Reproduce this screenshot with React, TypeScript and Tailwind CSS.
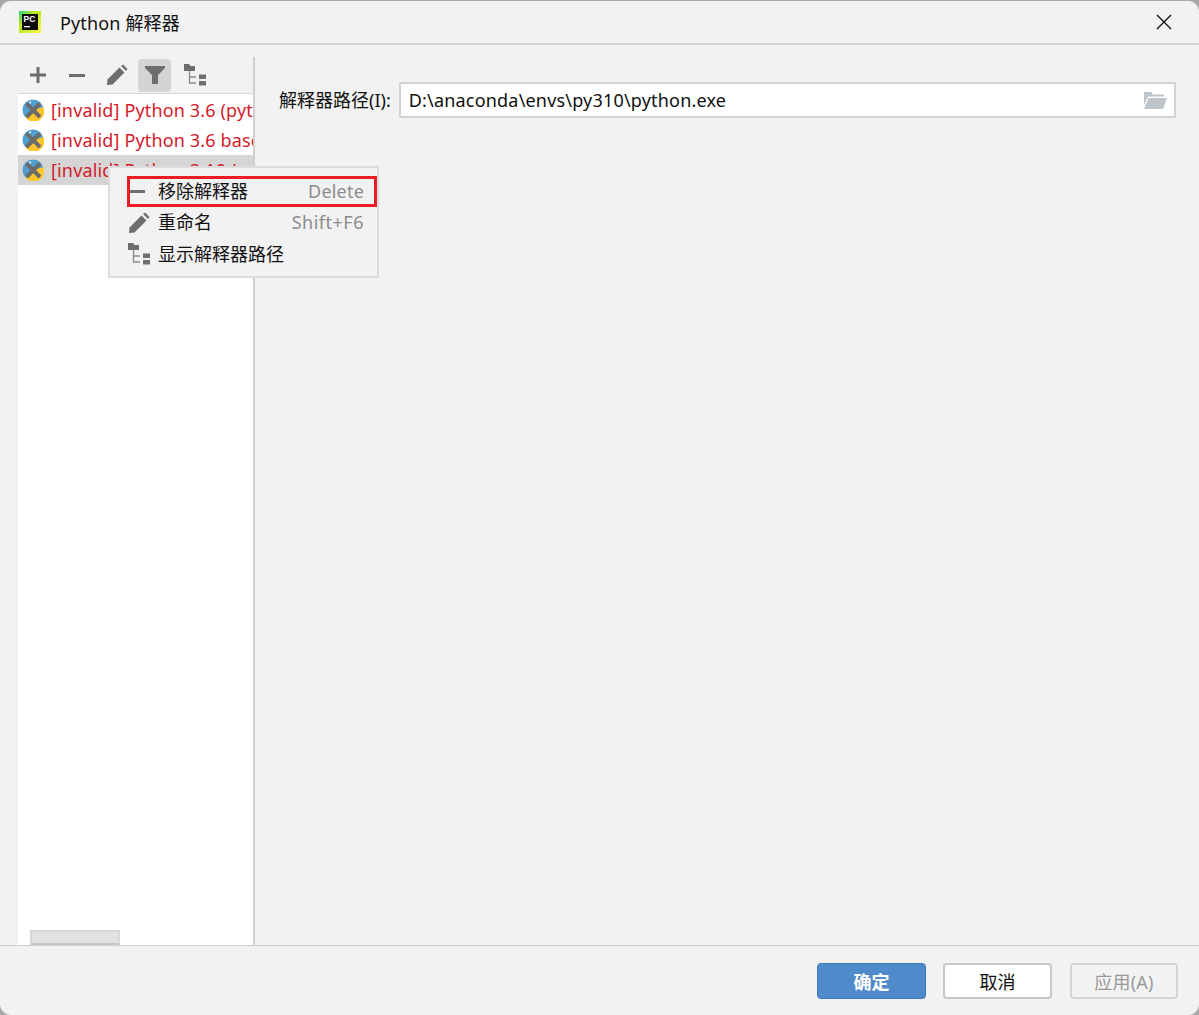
const font = { fontFamily: '"Noto Sans", "Noto Sans CJK SC", sans-serif' };

function PlusIcon() {
  return (
    <svg width="16" height="16" viewBox="0 0 16 16" fill="#6e6e6e">
      <rect x="0" y="6.5" width="16" height="3" />
      <rect x="6.5" y="0" width="3" height="16" />
    </svg>
  );
}
function MinusIcon({ w = 16 }: { w?: number }) {
  return (
    <svg width={w} height="3" viewBox={`0 0 ${w} 3`} fill="#6e6e6e">
      <rect width={w} height="3" />
    </svg>
  );
}
function PencilIcon() {
  return (
    <svg width="22" height="22" viewBox="0 0 22 22" fill="#6e6e6e">
      <path d="M1 21 L1.5 15.5 L13.5 3.5 L18.5 8.5 L6.5 20.5 Z" />
      <path d="M15 2 L17 0.5 L21.5 5 L20 7 Z" />
    </svg>
  );
}
function FilterIcon() {
  return (
    <svg width="20" height="18" viewBox="0 0 20 18" fill="#6e6e6e">
      <path d="M0 0 H20 V2 L13 9 V18 H7 V9 L0 2 Z" />
    </svg>
  );
}
function TreeIcon() {
  return (
    <svg width="22" height="22" viewBox="0 0 22 22">
      <path d="M0 0 H5 L6.5 2 H11 V7 H0 Z" fill="#6e6e6e" />
      <path d="M5.5 7 V19 H12 M5.5 13 H12" stroke="#8a8a8a" strokeWidth="1.3" fill="none" />
      <rect x="15" y="10.5" width="7" height="4.5" fill="#6e6e6e" />
      <rect x="15" y="17" width="7" height="4.5" fill="#6e6e6e" />
    </svg>
  );
}
function PythonInvalid() {
  return (
    <svg width="22" height="22" viewBox="0 0 22 22" className="shrink-0">
      <circle cx="11" cy="11" r="10.5" fill="#4f9fd0" />
      <path d="M21.5 8 A10.5 10.5 0 0 1 3.5 18.5 L11 11 Z" fill="#fdc62a" />
      <circle cx="8" cy="3.5" r="1.2" fill="#cde6f5" />
      <path d="M4.5 4.5 L18 18 M18 4.5 L4.5 18" stroke="#6b6b6b" strokeWidth="4" />
    </svg>
  );
}
function PcLogo() {
  return (
    <svg width="22" height="22" viewBox="0 0 22 22">
      <defs>
        <linearGradient id="pc" x1="0" y1="0" x2="1" y2="1">
          <stop offset="0" stopColor="#21d789" />
          <stop offset="0.35" stopColor="#b5e61d" />
          <stop offset="1" stopColor="#fcf84a" />
        </linearGradient>
      </defs>
      <rect width="22" height="22" fill="url(#pc)" />
      <rect x="3" y="3" width="16" height="16" fill="#0c0c0c" />
      <text x="4.5" y="11" fontSize="8.5" fontWeight="700" fill="#fff" fontFamily="Liberation Sans, sans-serif">PC</text>
      <rect x="5" y="15" width="6" height="1.3" fill="#fff" />
    </svg>
  );
}

function Row({ text, selected }: { text: string; selected?: boolean }) {
  return (
    <div className={`h-[30px] flex items-center pl-[4px] gap-[7px] overflow-hidden whitespace-nowrap ${selected ? 'bg-[#d5d5d5]' : ''}`}>
      <PythonInvalid />
      <span className="text-[#d41a2a] text-[18px] leading-[30px] tracking-[0.15px]">{text}</span>
    </div>
  );
}

function MenuItem({ icon, label, hint, boxed, lift, wide }: { icon: React.ReactNode; label: string; hint?: string; boxed?: boolean; lift?: boolean; wide?: boolean }) {
  return (
    <div className={`h-[31px] flex items-center pr-[10px] border-[3px] ${boxed ? 'border-[#ec1c24]' : 'border-transparent'}`}>
      <span className="w-[28px] flex justify-start items-center shrink-0">{icon}</span>
      <span className={`text-[18px] text-[#111] flex-1 whitespace-nowrap leading-none ${lift ? 'pb-[2px]' : ''}`}>{label}</span>
      {hint && <span className={`text-[18px] text-[#8c8c8c] leading-none ${lift ? 'pb-[2px]' : ''} ${wide ? 'tracking-[0.5px]' : 'tracking-[0.2px]'}`}>{hint}</span>}
    </div>
  );
}

export default function App() {
  return (
    <div className="w-[1199px] h-[1015px] bg-[#a8a8a8] pt-[1px]" style={font}>
      <div className="relative w-full h-full bg-[#f2f2f2] rounded-[11px] flex flex-col overflow-hidden">
        <div className="h-[44px] shrink-0 border-b-[2px] border-[#d1d1d1] flex items-center pl-[19px] pr-[27px]">
          <PcLogo />
          <span className="ml-[19px] pt-[2px] text-[18px] text-[#111] leading-none tracking-[0.15px]">Python 解释器</span>
          <svg className="ml-auto" width="16" height="16" viewBox="0 0 16 16" stroke="#111" strokeWidth="1.4">
            <path d="M1 1 L15 15 M15 1 L1 15" />
          </svg>
        </div>

        <div className="flex-1 flex min-h-0 pt-[12px]">
          <div className="w-[237px] ml-[18px] shrink-0 flex flex-col border-r-[2px] border-[#cfcfcf]">
            <div className="h-[37px] shrink-0 flex items-center border-b border-[#d8d8d8] pl-[12px]">
              <span className="w-[16px] flex justify-center"><PlusIcon /></span>
              <span className="w-[16px] ml-[23px] flex justify-center"><MinusIcon /></span>
              <span className="ml-[21px] flex justify-center"><PencilIcon /></span>
              <span className="ml-[10px] w-[33px] h-[33px] rounded-[4px] bg-[#d4d4d4] flex items-center justify-center"><FilterIcon /></span>
              <span className="ml-[13px] flex justify-center"><TreeIcon /></span>
            </div>
            <div className="relative flex-1 bg-white overflow-hidden w-[235px]">
              <div className="pt-[1px]">
                <Row text="[invalid] Python 3.6 (python)" />
                <Row text="[invalid] Python 3.6 base" />
                <Row text="[invalid] Python 3.10 (py310)" selected />
              </div>
              <div className="absolute left-[12px] bottom-0 w-[90px] h-[15px] bg-[#e2e2e2] border-[2px] border-[#d8d8d8] border-b-[#c8c8c8]" />
            </div>
          </div>

          <div className="flex-1 pl-[24px] pr-[23px] pt-[25px]">
            <div className="flex items-center">
              <span className="text-[18px] text-[#111] whitespace-nowrap">解释器路径(I):</span>
              <div className="ml-[8px] flex-1 h-[36px] bg-white border-[2px] border-[#d3d3d3] flex items-center pl-[8px] pr-[7px]">
                <span className="text-[18px] text-[#111] flex-1 tracking-[0.19px]">D:\anaconda\envs\py310\python.exe</span>
                <svg width="24" height="17" viewBox="0 0 24 17" fill="#bdc5cb">
                  <path d="M1 0 H8 L10 2.5 H21 V4.5 H5 L1 13 Z" />
                  <path d="M5.5 6 H24 L20 17 H1 Z" />
                </svg>
              </div>
            </div>
          </div>
        </div>

        <div className="h-[70px] shrink-0 border-t border-[#d1d1d1] flex items-start pt-[17px] pr-[21px] justify-end gap-[17px]">
          <button className="w-[109px] h-[36px] pt-[2px] rounded-[4px] bg-[#4f8bca] border border-[#3f78b5] text-white text-[18px] font-bold leading-none">确定</button>
          <button className="w-[109px] h-[36px] pt-[2px] rounded-[4px] bg-white border-[2px] border-[#c8c8c8] text-[#111] text-[18px] leading-none">取消</button>
          <button className="ml-[1px] w-[108px] h-[36px] pt-[2px] rounded-[4px] bg-[#f2f2f2] border-[2px] border-[#d3d3d3] text-[#999] text-[18px] leading-none tracking-[0.2px]">应用(A)</button>
        </div>

        <div className="absolute left-[108px] top-[165px] w-[271px] h-[112px] bg-[#f2f2f2] border-[2px] border-[#dcdcdc] pt-[8px] pl-[17px]">
          <MenuItem icon={<MinusIcon w={15} />} label="移除解释器" hint="Delete" boxed lift />
          <MenuItem icon={<span className="-ml-[2px] flex"><PencilIcon /></span>} label="重命名" hint="Shift+F6" lift wide />
          <MenuItem icon={<span className="-ml-[2px] flex"><TreeIcon /></span>} label="显示解释器路径" />
        </div>
      </div>
    </div>
  );
}
